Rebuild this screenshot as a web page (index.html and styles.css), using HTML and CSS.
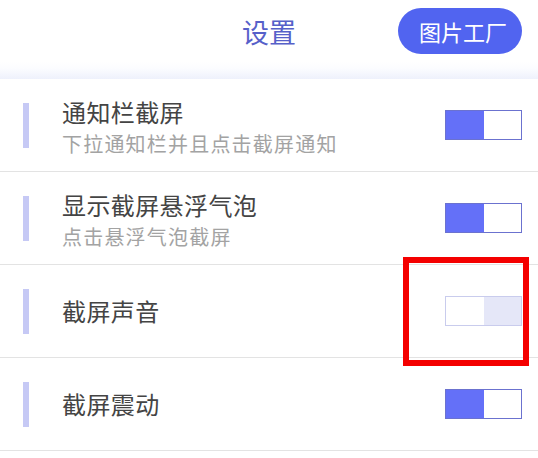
FILE: index.html
```html
<!DOCTYPE html>
<html lang="zh">
<head>
<meta charset="utf-8">
<title>设置</title>
<link rel="stylesheet" href="styles.css">
</head>
<body>
<div class="page">
  <header class="header">
    <div class="spacer"></div>
    <h1 class="title">设置</h1>
    <div class="actions"><button class="factory">图片工厂</button></div>
  </header>
  <div class="band"></div>
  <ul class="list">
    <li class="row">
      <span class="accent"></span>
      <div class="text">
        <div class="name">通知栏截屏</div>
        <div class="desc">下拉通知栏并且点击截屏通知</div>
      </div>
      <span class="toggle on"><span class="half a"></span><span class="half b"></span></span>
    </li>
    <li class="row">
      <span class="accent"></span>
      <div class="text">
        <div class="name">显示截屏悬浮气泡</div>
        <div class="desc">点击悬浮气泡截屏</div>
      </div>
      <span class="toggle on"><span class="half a"></span><span class="half b"></span></span>
    </li>
    <li class="row">
      <span class="accent"></span>
      <div class="text">
        <div class="name">截屏声音</div>
      </div>
      <span class="toggle off"><span class="half a"></span><span class="half b"></span></span>
    </li>
    <li class="row">
      <span class="accent"></span>
      <div class="text">
        <div class="name">截屏震动</div>
      </div>
      <span class="toggle on"><span class="half a"></span><span class="half b"></span></span>
    </li>
  </ul>
  <div class="highlight"></div>
</div>
</body>
</html>
```

FILE: styles.css
```css
html, body {
  margin: 0;
  padding: 0;
  background: #ffffff;
}
body {
  font-family: "Noto Sans CJK SC", "Noto Sans", sans-serif;
  width: 538px;
  height: 458px;
  overflow: hidden;
}
.page {
  position: relative;
  width: 538px;
}
.header {
  height: 62px;
  display: grid;
  grid-template-columns: 1fr auto 1fr;
  align-items: center;
}
.title {
  margin: 0;
  font-size: 27px;
  font-weight: 400;
  color: #5660c9;
  line-height: 1;
  padding-top: 1px;
}
.actions {
  display: flex;
  justify-content: flex-end;
  padding-right: 16px;
}
.factory {
  width: 124px;
  height: 46px;
  border: none;
  border-radius: 23px;
  background: #5164f0;
  color: #ffffff;
  font-family: inherit;
  font-size: 22px;
  line-height: 1;
  padding: 0 0 0 6px;
  letter-spacing: 0;
}
.band {
  height: 17px;
  background: linear-gradient(#ffffff 0%, #fbfcff 40%, #eef1fc 100%);
}
.list {
  list-style: none;
  margin: 0;
  padding: 0;
}
.row {
  height: 92px;
  border-bottom: 1px solid #e3e3e3;
  display: flex;
  align-items: center;
  padding-left: 23px;
}
.accent {
  width: 6px;
  height: 45px;
  background: #c6c9f5;
  margin-right: 33px;
  flex: none;
}
.text {
  flex: 1;
}
.text:has(.desc) {
  padding-top: 4px;
}
.name {
  font-size: 24px;
  letter-spacing: 0.4px;
  line-height: 30px;
  color: #444444;
}
.desc {
  margin-top: 4px;
  font-size: 20px;
  letter-spacing: 1.2px;
  line-height: 26px;
  color: #a3a3a3;
}
.toggle {
  display: flex;
  width: 77px;
  height: 30px;
  box-sizing: border-box;
  margin-right: 16px;
  flex: none;
}
.toggle .half {
  flex: 1;
}
.toggle.on {
  border: 1.5px solid #6b72cf;
}
.toggle.on .a {
  background: #6470f8;
}
.toggle.on .b {
  background: #ffffff;
}
.toggle.off {
  border: 1.5px solid #c9cced;
}
.toggle.off .a {
  background: #ffffff;
}
.toggle.off .b {
  background: #e5e7f8;
}
.highlight {
  position: absolute;
  left: 403px;
  top: 257px;
  width: 126px;
  height: 109px;
  box-sizing: border-box;
  border: 6px solid #f40000;
}
```
